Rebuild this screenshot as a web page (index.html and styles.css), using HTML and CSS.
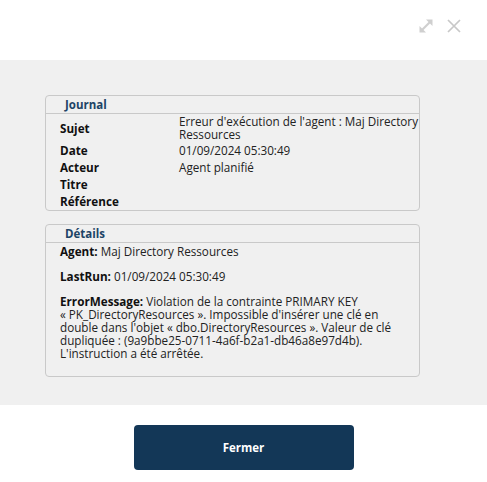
FILE: index.html
```html
<!DOCTYPE html>
<html lang="fr">
<head>
<meta charset="utf-8">
<title>Journal</title>
<link rel="stylesheet" href="styles.css">
</head>
<body>
<div class="modal">
  <div class="modal-head">
    <svg class="icon-expand" width="16" height="16" viewBox="0 0 16 16">
      <path d="M4 12 L12 4" stroke="#cfcfcf" stroke-width="2.2" fill="none"/>
      <path d="M8 1.5 H14.5 V8 Z" fill="#cfcfcf"/>
      <path d="M1.5 8 V14.5 H8 Z" fill="#cfcfcf"/>
    </svg>
    <svg class="icon-close" width="14" height="14" viewBox="0 0 14 14">
      <path d="M1 1 L13 13 M13 1 L1 13" stroke="#c8c8c8" stroke-width="1.7" fill="none"/>
    </svg>
  </div>
  <div class="modal-body">
    <div class="panel">
      <div class="panel-title">Journal</div>
      <div class="rows">
        <div class="row row-first"><div class="lbl">Sujet</div><div class="val">Erreur d'exécution de l'agent : Maj Directory<br>Ressources</div></div>
        <div class="row"><div class="lbl">Date</div><div class="val">01/09/2024 05:30:49</div></div>
        <div class="row"><div class="lbl">Acteur</div><div class="val">Agent planifié</div></div>
        <div class="row"><div class="lbl">Titre</div><div class="val"></div></div>
        <div class="row"><div class="lbl">Référence</div><div class="val"></div></div>
      </div>
    </div>
    <div class="panel panel-details">
      <div class="panel-title">Détails</div>
      <div class="details">
        <p><b>Agent:</b> Maj Directory Ressources</p>
        <p><b>LastRun:</b> 01/09/2024 05:30:49</p>
        <p><b>ErrorMessage:</b> Violation de la contrainte PRIMARY KEY<br>« PK_DirectoryResources ». Impossible d'insérer une clé en<br>double dans l'objet « dbo.DirectoryResources ». Valeur de clé<br>dupliquée : (9a9bbe25-0711-4a6f-b2a1-db46a8e97d4b).<br>L'instruction a été arrêtée.</p>
      </div>
    </div>
  </div>
  <div class="modal-foot">
    <button class="btn">Fermer</button>
  </div>
</div>
</body>
</html>
```
FILE: styles.css
```css
html, body {
  margin: 0;
  padding: 0;
  background: #ffffff;
}
body {
  font-family: "Open Sans", "Noto Sans", sans-serif;
  font-size: 11.7px;
  color: #222;
}
.modal {
  width: 487px;
}
.modal-head {
  height: 60px;
  display: flex;
  justify-content: flex-end;
  align-items: flex-start;
  padding: 0 26px 0 0;
  box-sizing: border-box;
  gap: 13px;
}
.icon-expand {
  margin-top: 18px;
}
.icon-close {
  margin-top: 19px;
}
.modal-body {
  background: #f0f0f0;
  padding: 35px 0 28px 45px;
  display: flex;
  flex-direction: column;
  gap: 13px;
}
.panel {
  width: 375px;
  box-sizing: border-box;
  border: 1px solid #c9c9c9;
  border-radius: 4px;
}
.panel-title {
  height: 17px;
  line-height: 18px;
  border-bottom: 1px solid #c9c9c9;
  padding-left: 19px;
  color: #1d4466;
  font-weight: 700;
  font-size: 11.5px;
}
.rows {
  padding: 0 0 0 14px;
}
.row {
  display: flex;
  align-items: center;
  padding: 2px 0;
  line-height: 13px;
  min-height: 13px;
}
.row-first {
  padding: 1px 0;
}
.lbl {
  width: 119px;
  font-weight: 700;
  color: #111;
}
.val {
  flex: 1;
  color: #222;
}
.details {
  padding: 2px 0 16px 14px;
  line-height: 13px;
}
.details p {
  margin: 0 0 12px 0;
  white-space: nowrap;
}
.details p:last-child {
  margin-bottom: 0;
}
.details b {
  font-weight: 700;
  color: #111;
}
.modal-foot {
  display: flex;
  justify-content: center;
  padding-top: 20px;
}
.btn {
  width: 220px;
  height: 45px;
  border: none;
  border-radius: 4px;
  background: #133757;
  color: #ffffff;
  font-family: "Open Sans", "Noto Sans", sans-serif;
  font-size: 11.5px;
  font-weight: 700;
}
```
